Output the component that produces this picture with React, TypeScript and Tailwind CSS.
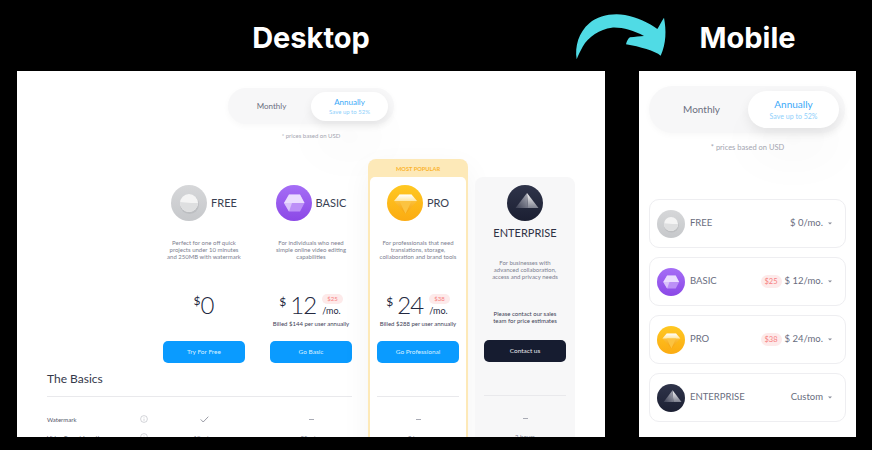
import React from "react";

type Kind = "free" | "basic" | "pro" | "ent";

function PlanIcon({ kind, size }: { kind: Kind; size: number }) {
  const id = `${kind}${size}`;
  return (
    <svg width={size} height={size} viewBox="0 0 36 36" className="shrink-0">
      <defs>
        <linearGradient id={`${id}a`} x1="0" y1="0" x2="0" y2="1">
          <stop offset="0" stopColor={kind === "free" ? "#d6d7d9" : kind === "basic" ? "#a56ef6" : kind === "pro" ? "#ffc822" : "#2f344a"} />
          <stop offset="1" stopColor={kind === "free" ? "#c6c8cb" : kind === "basic" ? "#8b48e6" : kind === "pro" ? "#fbab12" : "#1b1f32"} />
        </linearGradient>
        <linearGradient id={`${id}b`} x1="0" y1="0" x2="0" y2="1">
          <stop offset="0" stopColor="#ffffff" />
          <stop offset="1" stopColor="#ffe7a0" />
        </linearGradient>
        <linearGradient id={`${id}c`} x1="0" y1="0" x2="0" y2="1">
          <stop offset="0" stopColor="#ffd255" />
          <stop offset="1" stopColor="#f59f0a" />
        </linearGradient>
        <linearGradient id={`${id}d`} x1="0" y1="0" x2="0" y2="1">
          <stop offset="0" stopColor="#ffffff" />
          <stop offset="1" stopColor="#7f8290" />
        </linearGradient>
        <linearGradient id={`${id}e`} x1="1" y1="0" x2="0" y2="1">
          <stop offset="0" stopColor="#aeb0ba" />
          <stop offset="1" stopColor="#3a3e52" />
        </linearGradient>
      </defs>
      <circle cx="18" cy="18" r="18" fill={`url(#${id}a)`} />
      {kind === "free" && (
        <>
          <circle cx="18.5" cy="19.5" r="9.5" fill="#b4b6b9" opacity="0.6" />
          <circle cx="18" cy="18" r="9" fill="#f4f4f4" />
          <path d="M9 17 L20 18 L27 18 A9 9 0 0 1 9 18 Z" fill="#dedfe0" />
        </>
      )}
      {kind === "basic" && (
        <>
          <path d="M8 18 L13 9.5 L24 9.5 L28.5 18 L24 26.5 L13 26.5 Z" fill="#bc90f7" />
          <path d="M8 18 L13 9.5 L24 9.5 L28.5 18 Z" fill="#eadcff" />
          <path d="M8 18 L13 26.5 L16 18 Z" fill="#d9c2fb" />
        </>
      )}
      {kind === "pro" && (
        <>
          <path d="M12.5 9.5 L24.5 9.5 L30 16 L18.5 29 L7 16 Z" fill={`url(#${id}c)`} />
          <path d="M12.5 9.5 L24.5 9.5 L30 16 L7 16 Z" fill={`url(#${id}b)`} />
          <path d="M12.5 16 L24.5 16 L18.5 29 Z" fill="#fbc341" />
        </>
      )}
      {kind === "ent" && (
        <>
          <path d="M20 8 L31.5 23 L21 23 Z" fill={`url(#${id}d)`} />
          <path d="M20 8 L21 23 L8.5 23 Z" fill={`url(#${id}e)`} />
        </>
      )}
    </svg>
  );
}

function Toggle({ mobile }: { mobile?: boolean }) {
  return (
    <div
      className={
        mobile
          ? "flex h-[47px] w-[196px] items-center rounded-full bg-[#f7f7f8] pr-[6px] shadow-[0_2px_6px_rgba(0,0,0,0.03)]"
          : "flex h-[36px] w-[166px] items-center rounded-full bg-[#f7f7f8] pr-[6px] shadow-[0_2px_6px_rgba(0,0,0,0.03)]"
      }
    >
      <div className={mobile ? "flex-1 pl-[6px] text-center text-[10px] text-[#6b6f80]" : "flex-1 pl-[4px] text-center text-[8px] text-[#6b6f80]"}>
        Monthly
      </div>
      <div
        className={
          mobile
            ? "flex h-[37px] w-[91px] flex-col items-center justify-center rounded-full bg-white shadow-[0_5px_12px_rgba(0,0,0,0.07),0_30px_50px_rgba(0,0,0,0.03)]"
            : "flex h-[29px] w-[77px] flex-col items-center justify-center rounded-full bg-white shadow-[0_4px_10px_rgba(0,0,0,0.07),0_30px_50px_rgba(0,0,0,0.03)]"
        }
      >
        <span className={mobile ? "text-[10px] leading-[13px] text-[#3aa8f8]" : "text-[8px] leading-[11px] text-[#3aa8f8]"}>Annually</span>
        <span className={mobile ? "mt-[1px] text-[7px] leading-[9px] text-[#8fd0fb]" : "text-[6px] leading-[8px] text-[#8fd0fb]"}>Save up to 52%</span>
      </div>
    </div>
  );
}

function Desc({ lines }: { lines: string[] }) {
  return (
    <div className="text-center text-[6px] leading-[7px] text-[#7d8090]">
      {lines.map((l) => (
        <div key={l} className="whitespace-nowrap">{l}</div>
      ))}
    </div>
  );
}

function Price({ value, old }: { value: string; old: string }) {
  return (
    <div className="flex h-[30px] items-center justify-center text-[#232840]">
      <span className="mr-[4px] mb-[6px] text-[12px] leading-none">$</span>
      <span className="text-[24px] font-light leading-none tracking-[-1px]">{value}</span>
      <div className="ml-[6px] flex flex-col items-start">
        <span className="rounded-full bg-[#fdeaea] px-[5px] text-[6px] leading-[10px] text-[#f77f7f]">{old}</span>
        <span className="mt-[2px] text-[9px] leading-[10px]">/mo.</span>
      </div>
    </div>
  );
}

function Btn({ label, dark }: { label: string; dark?: boolean }) {
  return (
    <div
      className={
        dark
          ? "mt-[14px] flex h-[22px] w-[82px] items-center justify-center rounded-[5px] bg-[#161c30] text-[6.5px] text-[#e8e9ee]"
          : "mt-[14px] flex h-[22px] w-[82px] items-center justify-center rounded-[5px] bg-[#0a9bff] text-[6.5px] text-[#d9f0ff]"
      }
    >
      {label}
    </div>
  );
}

function Rows({ top, second }: { top: React.ReactNode; second: string }) {
  return (
    <div className="w-full pt-[13px] text-center text-[6px] text-[#7d8090]">
      <div className="flex h-[18px] items-center justify-center">{top}</div>
      <div className="flex h-[18px] items-center justify-center">{second}</div>
    </div>
  );
}

const Dash = () => <div className="h-[1px] w-[5px] bg-[#a9abb5]" />;

function Info() {
  return (
    <svg width="8" height="8" viewBox="0 0 8 8" fill="none" stroke="#b5b7c0" strokeWidth="0.6">
      <circle cx="4" cy="4" r="3.4" />
      <path d="M4 3.6V5.8M4 2.2V2.8" />
    </svg>
  );
}

function Check() {
  return (
    <svg width="9" height="7" viewBox="0 0 9 7" fill="none" stroke="#6e7180" strokeWidth="0.7">
      <path d="M0.7 3.4L3.2 6L8.3 0.7" />
    </svg>
  );
}

function PlainCol({ kind, name, lines, price, billed, btn, top, second, wideLine }: {
  kind: Kind; name: string; lines: string[]; price: React.ReactNode; billed: string; btn: string; top: React.ReactNode; second: string; wideLine?: boolean;
}) {
  return (
    <div className="flex w-[107px] flex-col items-center">
      <div className="mt-[26px] flex h-[36px] items-center justify-center gap-[4px] pl-[1px]">
        <PlanIcon kind={kind} size={36} />
        <span className="text-[11px] text-[#3a3f52]">{name}</span>
      </div>
      <div className="mt-[18px] h-[21px] pl-[1px]"><Desc lines={lines} /></div>
      <div className="mt-[30px] w-full pl-[1px]">{price}</div>
      <div className="h-[7px] whitespace-nowrap pl-[1px] text-[6px] leading-[7px] text-[#3e4256]">{billed}</div>
      <div className="pl-[1px]"><Btn label={btn} /></div>
      <div className={wideLine ? "mt-[33px] h-[1px] w-[107px] bg-[#e9e9ec]" : "mt-[33px] h-[1px] w-[95px] self-start bg-[#e9e9ec]"} />
      <div className="w-full pl-[1px]"><Rows top={top} second={second} /></div>
    </div>
  );
}

function Desktop() {
  return (
    <div className="h-[366px] w-[588px] overflow-hidden bg-white">
      <div className="flex flex-col items-center pt-[17px]">
        <Toggle />
        <div className="mt-[7px] h-[10px] text-[6px] leading-[10px] text-[#a3a5b0]">* prices based on USD</div>
      </div>
      <div className="mt-[18px] flex items-start">
        <div className="w-[133px] pl-[30px]">
          <div className="flex h-[237px] flex-col justify-end pb-[9px]">
            <div className="text-[12px] leading-[16px] text-[#34384a]">The Basics</div>
          </div>
          <div className="h-[1px] bg-[#e9e9ec]" />
          <div className="pt-[13px] text-[6px] text-[#52566a]">
            <div className="flex h-[18px] items-center justify-between pr-[2px]"><span>Watermark</span><Info /></div>
            <div className="flex h-[18px] items-center justify-between pr-[2px]"><span>Video Export Length</span><Info /></div>
          </div>
        </div>
        <PlainCol
          kind="free"
          name="FREE"
          lines={["Perfect for one off quick", "projects under 10 minutes", "and 250MB with watermark"]}
          price={
            <div className="flex h-[30px] items-center justify-center text-[#232840]">
              <span className="mb-[8px] text-[12px] leading-none">$</span>
              <span className="text-[24px] font-light leading-none">0</span>
            </div>
          }
          billed=""
          btn="Try For Free"
          top={<Check />}
          second="10 mins"
          wideLine
        />
        <PlainCol
          kind="basic"
          name="BASIC"
          lines={["For individuals who need", "simple online video editing", "capabilities"]}
          price={<Price value="12" old="$25" />}
          billed="Billed $144 per user annually"
          btn="Go Basic"
          top={<Dash />}
          second="25 mins"
        />
        <div className="w-[107px] pl-[4px] pr-[3px]">
          <div className="h-[300px] rounded-t-[8px] bg-[#fde9b8] px-[2px] shadow-[0_10px_30px_rgba(0,0,0,0.05)]">
            <div className="flex h-[18px] items-center justify-center pt-[3px] text-[5.7px] font-bold text-[#fbb32c]">
              MOST POPULAR
            </div>
            <div className="flex h-[282px] flex-col items-center rounded-t-[5px] bg-white">
              <div className="mt-[8px] flex h-[36px] items-center justify-center gap-[4px]">
                <PlanIcon kind="pro" size={36} />
                <span className="text-[11px] text-[#3a3f52]">PRO</span>
              </div>
              <div className="mt-[18px] h-[21px]">
                <Desc lines={["For professionals that need", "translations, storage,", "collaboration and brand tools"]} />
              </div>
              <div className="mt-[30px] w-full"><Price value="24" old="$38" /></div>
              <div className="h-[7px] whitespace-nowrap text-[6px] leading-[7px] text-[#3e4256]">Billed $288 per user annually</div>
              <Btn label="Go Professional" />
              <div className="mt-[33px] h-[1px] w-[82px] bg-[#e9e9ec]" />
              <Rows top={<Dash />} second="2 hours" />
            </div>
          </div>
        </div>
        <div className="w-[107px] pl-[4px] pr-[3px] pt-[18px]">
          <div className="flex h-[282px] flex-col items-center rounded-t-[8px] bg-[#f7f7f8]">
            <div className="mt-[8px]"><PlanIcon kind="ent" size={36} /></div>
            <div className="mt-[5px] h-[14px] text-[11px] leading-[14px] text-[#2e3245]">ENTERPRISE</div>
            <div className="mt-[19px] h-[21px]">
              <Desc lines={["For businesses with", "advanced collaboration,", "access and privacy needs"]} />
            </div>
            <div className="mt-[30px] h-[16px] text-center text-[6px] leading-[7px] text-[#3e4256]">
              <div>Please contact our sales</div>
              <div>team for price estimates</div>
            </div>
            <Btn label="Contact us" dark />
            <div className="mt-[33px] h-[1px] w-[82px] bg-[#e9e9ec]" />
            <Rows top={<Dash />} second="2 hours" />
          </div>
        </div>
      </div>
    </div>
  );
}

function MobileRow({ kind, name, old, price }: { kind: Kind; name: string; old?: string; price: string }) {
  return (
    <div className="flex h-[49px] items-center rounded-[10px] border border-[#eeeef1] pl-[7px] pr-[13px]">
      <PlanIcon kind={kind} size={28} />
      <span className="ml-[5px] text-[9.5px] text-[#696d80]">{name}</span>
      <div className="ml-auto flex items-center">
        {old && (
          <span className="mr-[3px] rounded-full bg-[#fdeaea] px-[4px] text-[7.5px] leading-[13px] text-[#f77f7f]">{old}</span>
        )}
        <span className="text-[9.5px] text-[#696d80]">{price}</span>
        <svg width="4" height="3" viewBox="0 0 4 3" className="ml-[5px]">
          <path d="M0 0.5H4L2 2.5Z" fill="#8a8d9b" />
        </svg>
      </div>
    </div>
  );
}

function Mobile() {
  return (
    <div className="flex h-[366px] w-[217px] flex-col overflow-hidden bg-white px-[10px] pt-[15px]">
      <Toggle mobile />
      <div className="mt-[10px] h-[10px] text-center text-[7.5px] leading-[10px] text-[#a3a5b0]">* prices based on USD</div>
      <div className="mt-[46px] flex flex-col gap-[9px]">
        <MobileRow kind="free" name="FREE" price="$ 0/mo." />
        <MobileRow kind="basic" name="BASIC" old="$25" price="$ 12/mo." />
        <MobileRow kind="pro" name="PRO" old="$38" price="$ 24/mo." />
        <MobileRow kind="ent" name="ENTERPRISE" price="Custom" />
      </div>
    </div>
  );
}

export default function App() {
  return (
    <div className="relative flex h-[450px] w-[872px] overflow-hidden bg-black pl-[17px] font-['Lato',sans-serif]">
      <div className="w-[588px]">
        <div className="flex h-[71px] items-center justify-center pt-[5px] font-['Inter',sans-serif] text-[29px] font-bold text-white">Desktop</div>
        <Desktop />
      </div>
      <div className="ml-[34px] w-[217px]">
        <div className="flex h-[71px] items-center justify-center pt-[5px] font-['Inter',sans-serif] text-[29px] font-bold text-white">Mobile</div>
        <Mobile />
      </div>
      <svg className="absolute left-[570px] top-[5px]" width="105" height="60" viewBox="0 0 315 180">
        <path
          d="M20 163 C14 125 26 82 58 55 C85 32 125 24 165 30 C200 36 238 54 262 72 C268 62 275 48 282 38 C289 75 289 115 272 152 C255 138 210 125 168 118 C170 108 175 100 180 97 C195 95 210 94 222 93 C190 76 155 66 125 68 C90 72 55 95 38 125 C30 140 25 150 20 163 Z"
          fill="#50dbe5"
        />
      </svg>
    </div>
  );
}
